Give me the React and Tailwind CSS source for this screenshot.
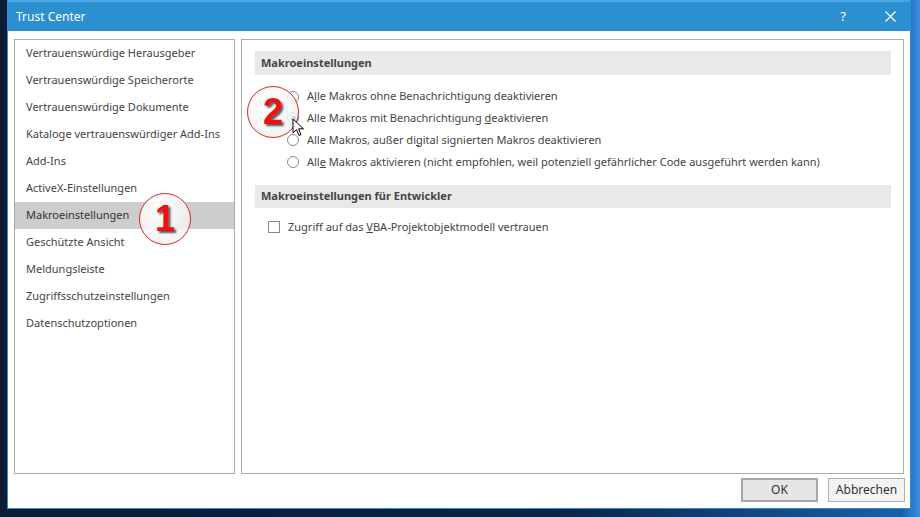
import React from "react";

const font = { fontFamily: '"Noto Sans", "Open Sans", sans-serif' };

const leftItems = [
  "Vertrauenswürdige Herausgeber",
  "Vertrauenswürdige Speicherorte",
  "Vertrauenswürdige Dokumente",
  "Kataloge vertrauenswürdiger Add-Ins",
  "Add-Ins",
  "ActiveX-Einstellungen",
  "Makroeinstellungen",
  "Geschützte Ansicht",
  "Meldungsleiste",
  "Zugriffsschutzeinstellungen",
  "Datenschutzoptionen",
];

function Radio({ checked }) {
  return (
    <span className="w-[12px] h-[12px] rounded-full border border-[#8a8a8a] bg-white flex items-center justify-center shrink-0">
      {checked && <span className="w-[5px] h-[5px] rounded-full bg-[#222]" />}
    </span>
  );
}

function Badge({ n, className }) {
  return (
    <div className={"absolute w-[52px] h-[52px] rounded-full border-[1.5px] border-[#d42a2a] bg-[radial-gradient(circle_at_40%_35%,rgba(255,255,255,0.95),rgba(235,235,235,0.8))] flex items-center justify-center " + className}>
      <span
        className="text-[36px] font-bold text-[#ee1111] leading-none [text-shadow:2px_2px_2px_rgba(0,0,0,0.65)]"
        style={{ fontFamily: '"Liberation Sans", Arial, sans-serif' }}
      >
        {n}
      </span>
    </div>
  );
}

export default function App() {
  return (
    <div
      className="w-[920px] h-[517px] overflow-hidden relative bg-[linear-gradient(90deg,#0a1c36_0%,#0b2244_60%,#1a5fa8_98%,#3a8ee0_100%)]"
      style={font}
    >
      <div className="ml-[7px] w-[904px] h-[509px] bg-white flex flex-col border-x border-b border-[#2b8fd0] text-[11px] text-[#444]">
        {/* Title bar */}
        <div className="h-[31px] bg-[#2b8fd0] border-t-[2px] border-[#4aa6e4] flex items-center pl-[8px] text-white shrink-0">
          <span className="text-[12px]">Trust Center</span>
          <span className="ml-auto mr-[39px] text-[13px]">?</span>
          <svg width="11" height="11" viewBox="0 0 11 11" className="mr-[14px]">
            <path d="M0.5 0.5 L10.5 10.5 M10.5 0.5 L0.5 10.5" stroke="white" strokeWidth="1.2" />
          </svg>
        </div>

        {/* Body */}
        <div className="flex gap-[6px] px-[6px] pt-[8px]">
          {/* Left nav */}
          <div className="w-[221px] h-[435px] border border-[#ababab] flex flex-col">
            {leftItems.map((t, i) => (
              <div
                key={t}
                className={
                  "h-[27px] flex items-center pl-[11px] whitespace-nowrap " +
                  (i === 6 ? "bg-[#cdcdcd] text-[#333]" : "")
                }
              >
                {t}
              </div>
            ))}
          </div>

          {/* Right content */}
          <div className="flex-1 h-[435px] border border-[#ababab] pl-[13px] pr-[12px] pt-[11px]">
            <div className="h-[24px] bg-[#e9e9e9] flex items-center pl-[6px] font-bold text-[#444]">
              Makroeinstellungen
            </div>
            <div className="flex flex-col pl-[32px] pt-[11px]">
              <div className="h-[21px] flex items-center gap-[8px]">
                <Radio />
                <span>A<u>l</u>le Makros ohne Benachrichtigung deaktivieren</span>
              </div>
              <div className="h-[22px] flex items-center gap-[8px]">
                <Radio checked />
                <span>Alle Makros mit Benachrichtigung <u>d</u>eaktivieren</span>
              </div>
              <div className="h-[22px] flex items-center gap-[8px]">
                <Radio />
                <span>Alle Makros, außer di<u>g</u>ital signierten Makros deaktivieren</span>
              </div>
              <div className="h-[22px] flex items-center gap-[8px]">
                <Radio />
                <span>All<u>e</u> Makros aktivieren (nicht empfohlen, weil potenziell gefährlicher Code ausgeführt werden kann)</span>
              </div>
            </div>
            <div className="mt-[12px] h-[23px] bg-[#e9e9e9] flex items-center pl-[6px] font-bold text-[#444]">
              Makroeinstellungen für Entwickler
            </div>
            <div className="h-[38px] flex items-center gap-[8px] pl-[13px]">
              <span className="w-[12px] h-[12px] border border-[#8a8a8a] bg-white shrink-0" />
              <span>Zugriff auf das <u>V</u>BA-Projektobjektmodell vertrauen</span>
            </div>
          </div>
        </div>

        {/* Footer */}
        <div className="flex justify-end gap-[10px] pr-[5px] pt-[4px]">
          <button className="w-[77px] h-[24px] border-2 border-[#a8a8a8] bg-[#e6e6e6] text-[#333] text-[12px]" style={font}>
            OK
          </button>
          <button className="w-[77px] h-[24px] border border-[#b0b0b0] bg-[#f3f3f3] text-[#333] text-[12px]" style={font}>
            Abbrechen
          </button>
        </div>
      </div>

      {/* Annotations */}
      <Badge n="1" className="left-[139px] top-[193px]" />
      <Badge n="2" className="left-[247px] top-[86px]" />
      <svg className="absolute left-[292px] top-[118px]" width="14" height="20" viewBox="0 0 14 20">
        <path d="M1 1 L1 15 L4.5 11.5 L7 17.5 L9 16.6 L6.6 10.8 L11.5 10.8 Z" fill="white" stroke="black" strokeWidth="1" strokeLinejoin="round" />
      </svg>
    </div>
  );
}
